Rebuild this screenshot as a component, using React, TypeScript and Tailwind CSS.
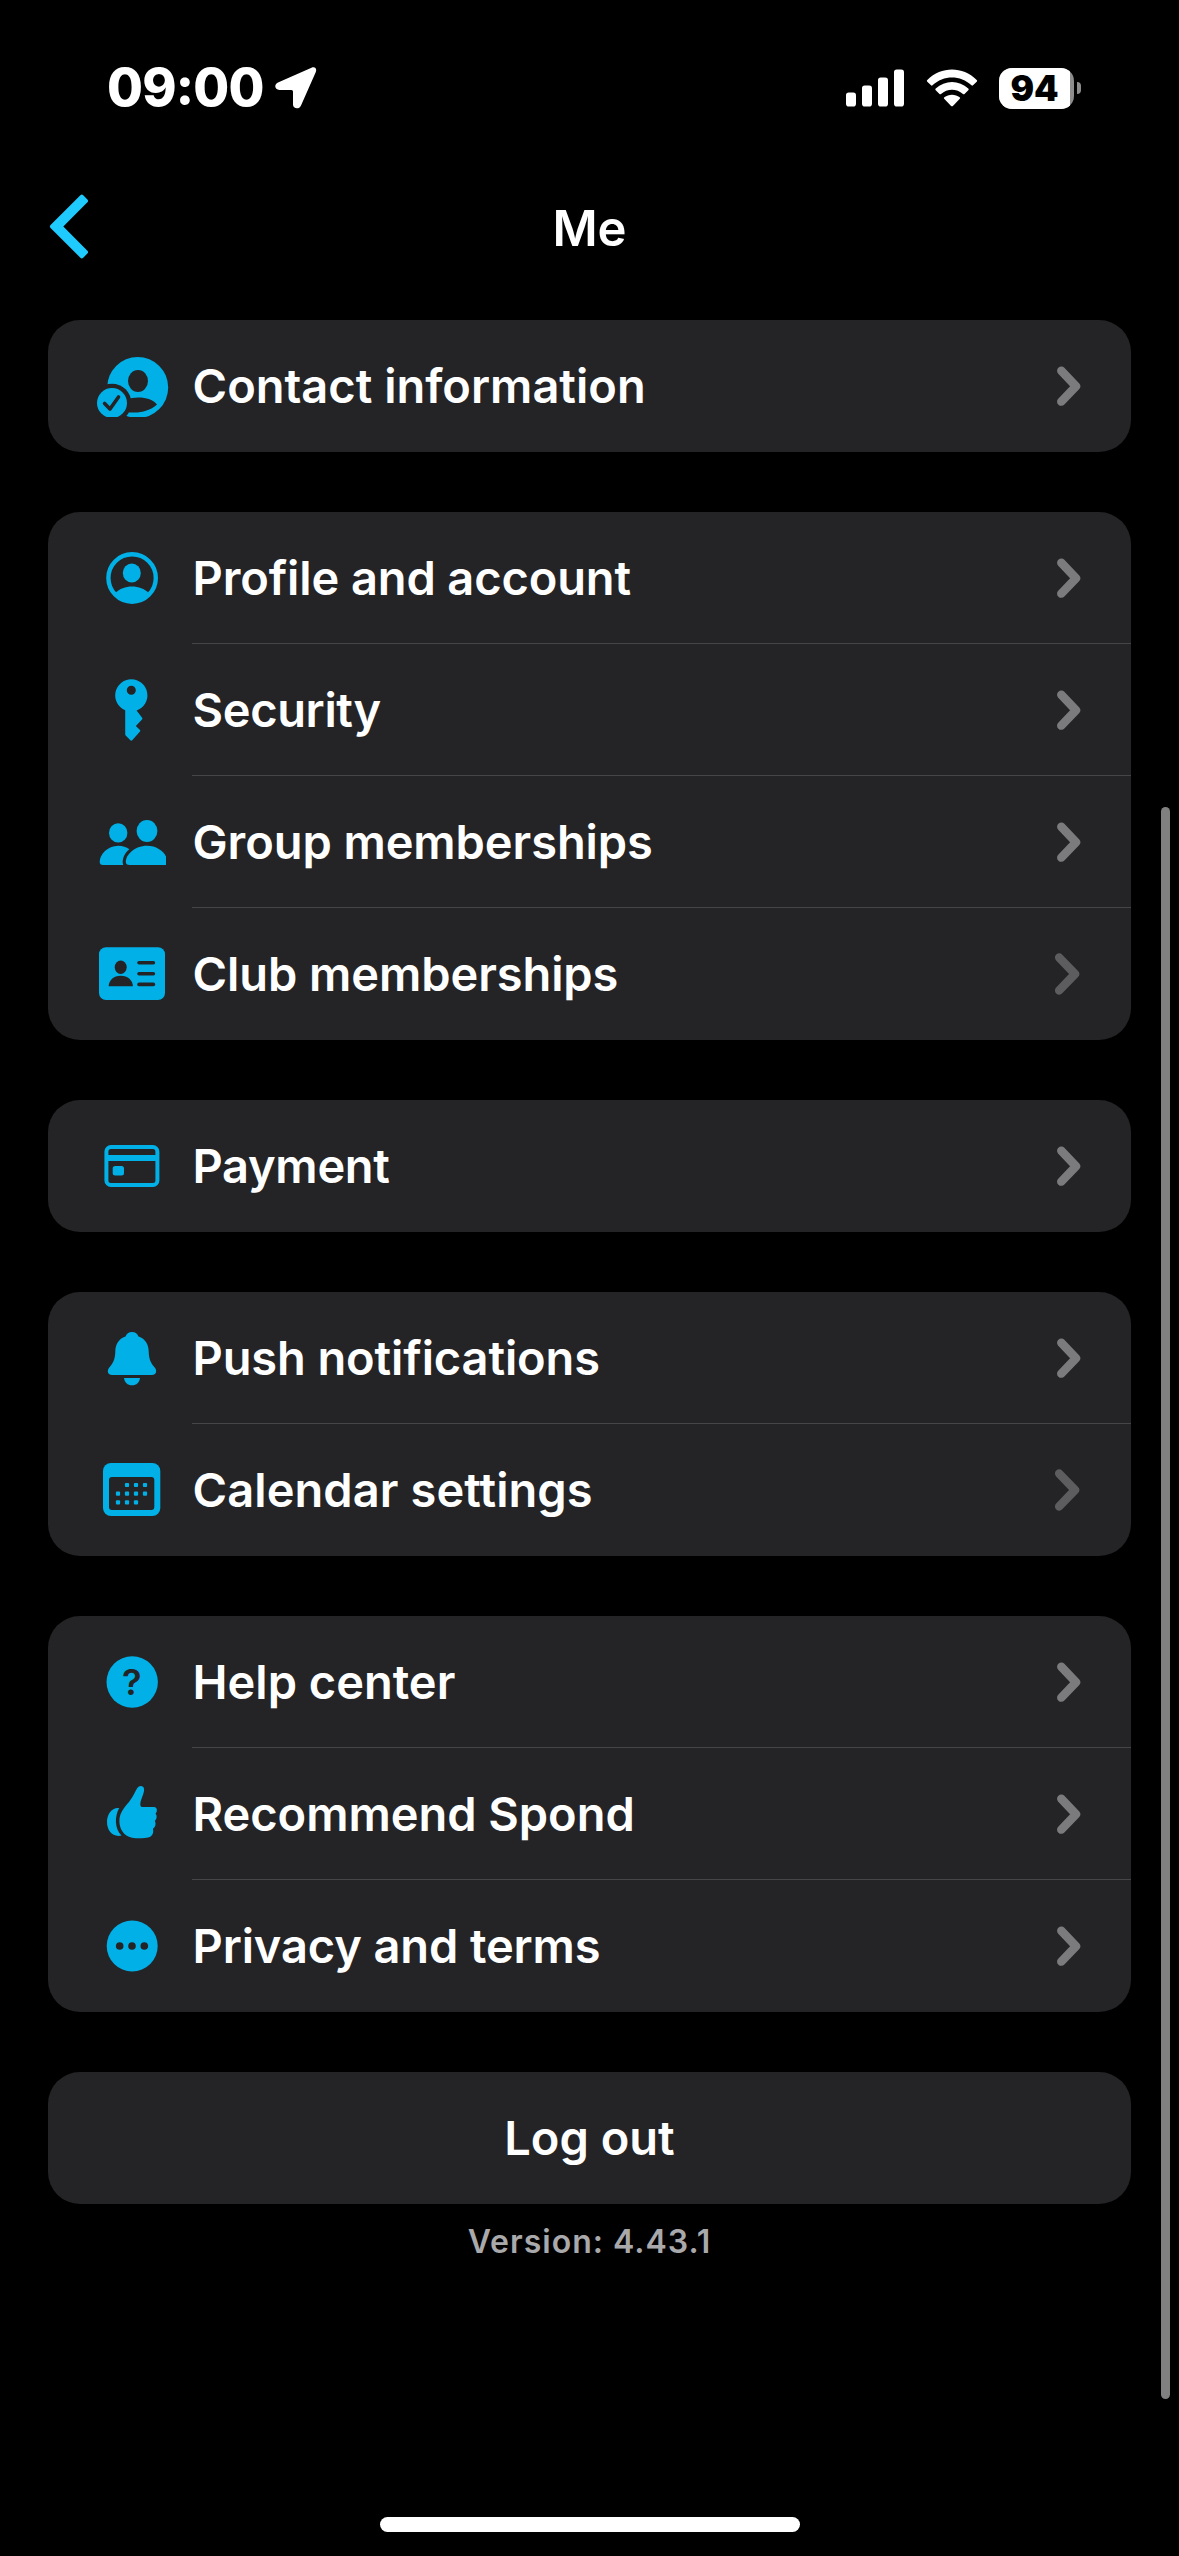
import type { ReactNode } from "react";

const BLUE = "#00b0e6";
const CARD = "#242426";

function RowIcon({ children }: { children: ReactNode }) {
  return (
    <svg className="h-[132px] w-24 shrink-0" viewBox="84 0 96 132" fill={BLUE}>
      {children}
    </svg>
  );
}

const icons = {
  contact: (
    <RowIcon>
      <clipPath id="contactClip">
        <rect x="84" y="30" width="96" height="67" />
      </clipPath>
      <g clipPath="url(#contactClip)">
        <circle cx="137.7" cy="67.5" r="30.5" />
        <ellipse cx="138" cy="61" rx="10" ry="11" fill={CARD} />
        <path d="M116 86C126 75 150 75 157 84.6C146 94.4 130 94.4 116 89Z" fill={CARD} />
        <circle cx="112" cy="83" r="19.3" fill={CARD} />
        <circle cx="112" cy="83" r="15" />
        <path d="M104.6 83.5L110 89L118.5 77" fill="none" stroke={CARD} strokeWidth="3.6" strokeLinecap="round" strokeLinejoin="round" />
      </g>
    </RowIcon>
  ),
  profile: (
    <RowIcon>
      <circle cx="132.1" cy="66" r="23.7" fill="none" stroke={BLUE} strokeWidth="4.4" />
      <ellipse cx="131.8" cy="61" rx="9" ry="9.4" />
      <path d="M115.5 81C123 72.2 141 72.2 148.6 81C141 93.5 123 93.5 115.5 81Z" />
    </RowIcon>
  ),
  key: (
    <RowIcon>
      <path
        fillRule="evenodd"
        d="M131.3 35.3A16.1 16.1 0 0 1 136.6 66.6L142.3 74Q142.7 74.8 142 75.5L135.8 82L140 86Q140.7 86.8 140 87.6L132.2 96.3Q131.3 97 130.4 96.3L125.7 91.5Q125.2 91 125.2 90V66.3A16.1 16.1 0 0 1 131.3 35.3ZM131.3 41.7A4.5 4.5 0 1 0 131.3 50.7A4.5 4.5 0 1 0 131.3 41.7Z"
      />
    </RowIcon>
  ),
  group: (
    <RowIcon>
      <ellipse cx="118.2" cy="56.9" rx="9.2" ry="9.7" />
      <ellipse cx="147" cy="55" rx="10.4" ry="11.1" />
      <path d="M129.4 73.2C126.5 71 122.5 69.8 118.3 69.8C107.5 69.8 99.7 78.5 99.7 85.7Q99.7 89 103 89H123.2C121.5 83.5 124.5 77 129.4 73.2Z" />
      <path d="M147 69.7C134.5 69.7 125.8 78.8 125.8 85.7Q125.8 89 129.5 89H166V80.5C163 74.5 156 69.7 147 69.7Z" />
    </RowIcon>
  ),
  club: (
    <RowIcon>
      <rect x="99" y="39.3" width="66" height="52.7" rx="7" />
      <g fill={CARD}>
        <ellipse cx="120.7" cy="59.3" rx="6" ry="6.7" />
        <path d="M108.7 78.2C108.7 72.5 113.5 67.7 120.7 67.7C127.9 67.7 132.9 72.5 132.9 78.2Z" />
        <rect x="137.2" y="53" width="18" height="3.6" rx="1.8" />
        <rect x="137.2" y="64" width="18" height="3.6" rx="1.8" />
        <rect x="137.2" y="74.6" width="18" height="3.6" rx="1.8" />
      </g>
    </RowIcon>
  ),
  payment: (
    <RowIcon>
      <rect x="106.4" y="47" width="51" height="38" rx="4.5" fill="none" stroke={BLUE} strokeWidth="4" />
      <rect x="106" y="55" width="52" height="6" />
      <rect x="112.7" y="66" width="11.3" height="9.4" rx="2.5" />
    </RowIcon>
  ),
  bell: (
    <RowIcon>
      <path d="M132 40C128.8 40 126.3 41.8 125.5 44.6C118.5 47 115.5 52.5 115.3 59.5C115.1 67 113.5 70.5 109.3 75.5C106.5 79 107.8 83 112 83H152C156.2 83 157.5 79 154.7 75.5C150.5 70.5 148.9 67 148.7 59.5C148.5 52.5 145.5 47 138.5 44.6C137.7 41.8 135.2 40 132 40Z" />
      <path d="M124 86H140C139.5 90.5 136.5 93.3 132 93.3C127.5 93.3 124.5 90.5 124 86Z" />
    </RowIcon>
  ),
  calendar: (
    <RowIcon>
      <rect x="103" y="39" width="57.3" height="53" rx="8" />
      <rect x="109" y="53" width="45.3" height="33" rx="3" fill={CARD} />
      {[
        [127, 61], [136, 61], [145, 61],
        [118, 69.7], [127, 69.7], [136, 69.7], [145, 69.7],
        [118, 78.3], [127, 78.3], [136, 78.3],
      ].map(([x, y]) => (
        <rect key={`${x}-${y}`} x={x - 2.1} y={y - 2.1} width="4.2" height="4.2" rx="1" />
      ))}
    </RowIcon>
  ),
  help: (
    <RowIcon>
      <circle cx="132.2" cy="66" r="25.7" />
      <text x="131.9" y="79.1" textAnchor="middle" fill={CARD} fontFamily="Inter" fontWeight="600" fontSize="36">
        ?
      </text>
    </RowIcon>
  ),
  thumb: (
    <RowIcon>
      <path d="M140.6 38C143.5 37.8 144.6 40 144 43C143.2 48 139.8 53 140.4 57.5Q140.8 59 142.5 59H154C157.3 59 157.8 63.5 155.5 65.5C157.3 67.5 157 71 154.8 73C156.3 75.5 155.5 79 152.9 80.8C154 84 152.5 88.5 149 89.3C144 90.6 137 90.7 132 89.7C123.5 88 119.3 80.5 119.4 73C119.5 65 123.5 60.5 129 54C133.5 48.5 135.5 42.5 137.5 39.8Q138.8 38.1 140.6 38Z" />
      <path d="M119.2 60C112 59 107 66 107 74C107 82.5 112.5 89.5 121.5 87.6C114.5 80.5 114.5 68.5 119.2 60Z" />
    </RowIcon>
  ),
  more: (
    <RowIcon>
      <circle cx="132.2" cy="66" r="25.5" />
      <g fill={CARD}>
        <circle cx="119.7" cy="66" r="3.8" />
        <circle cx="132" cy="66" r="3.8" />
        <circle cx="144.3" cy="66" r="3.8" />
      </g>
    </RowIcon>
  ),
};

type Item = { icon: keyof typeof icons; label: string; tracking: string; dim?: boolean };

const sections: Item[][] = [
  [{ icon: "contact", label: "Contact information", tracking: "tracking-[0px]" }],
  [
    { icon: "profile", label: "Profile and account", tracking: "tracking-[-0.12px]" },
    { icon: "key", label: "Security", tracking: "tracking-[-0.35px]" },
    { icon: "group", label: "Group memberships", tracking: "tracking-[-0.08px]" },
    { icon: "club", label: "Club memberships", tracking: "tracking-[-0.08px]", dim: true },
  ],
  [{ icon: "payment", label: "Payment", tracking: "tracking-[-0.3px]" }],
  [
    { icon: "bell", label: "Push notifications", tracking: "tracking-[-0.12px]" },
    { icon: "calendar", label: "Calendar settings", tracking: "tracking-[0.08px]", dim: true },
  ],
  [
    { icon: "help", label: "Help center", tracking: "tracking-[0px]" },
    { icon: "thumb", label: "Recommend Spond", tracking: "tracking-[-0.04px]" },
    { icon: "more", label: "Privacy and terms", tracking: "tracking-[-0.12px]" },
  ],
];

function Row({ item, last }: { item: Item; last: boolean }) {
  return (
    <div className="flex h-[132px] items-center pl-9">
      {icons[item.icon]}
      <div
        className={
          last
            ? "ml-3 flex h-full flex-1 items-center justify-between pr-12 pl-[0.5px]"
            : "ml-3 flex h-full flex-1 items-center justify-between border-b border-[#464648] pr-12 pl-[0.5px]"
        }
      >
        <span className={`text-[47px] leading-[60px] font-semibold whitespace-nowrap ${item.tracking}`}>{item.label}</span>
        <svg className="h-[42px] w-[30px]" viewBox="0 0 30 42" fill="none">
          <path
            d={item.dim ? "M6.2 4.6L22 21L6.2 37.4" : "M8.3 5.8L23 21.2L8.3 36.6"}
            stroke={item.dim ? "#5d5d5f" : "#7b7b7d"}
            strokeWidth="8.5"
            strokeLinecap="round"
            strokeLinejoin="round"
          />
        </svg>
      </div>
    </div>
  );
}

function StatusBar() {
  return (
    <div className="flex h-[177px] items-start justify-between pt-[60px] pr-[98px] pl-[107px]">
      <div className="flex h-14 items-center">
        <div className="flex w-[154px] items-center text-[52px] leading-[56px] font-extrabold tracking-[-0.8px]">
          <span>09</span>
          <span className="relative -top-[2px]">:</span>
          <span>00</span>
        </div>
        <svg className="ml-[13px] h-[44px] w-[44px]" viewBox="0 0 44 44" fill="#fff">
          <path d="M37.5 1.7C41 0.2 43.2 2.7 41.7 6.2L27 39.5C25.2 43.8 19 43 19 38.5V25.5Q19 24 17.5 24H5.5C0.5 24 -0.2 18.3 4 16.5Z" />
        </svg>
      </div>
      <div className="flex h-14 items-center">
        <svg className="h-[38px] w-[58px]" viewBox="0 0 58 38" fill="#fff">
          <rect x="0" y="23.5" width="10" height="14" rx="2.8" />
          <rect x="16" y="16.5" width="10" height="21" rx="2.8" />
          <rect x="32" y="8.5" width="10" height="29" rx="2.8" />
          <rect x="48" y="0.5" width="10" height="37" rx="2.8" />
        </svg>
        <svg className="ml-[22px] h-[38px] w-[52px]" viewBox="0 0 52 38" fill="#fff">
          <path d="M1.3 12.7Q0.4 11.8 1.3 10.9C15.5 -3 36.5 -3 50.7 10.9Q51.6 11.8 50.7 12.7L47 16.3Q46.3 17 45.5 16.3C34.5 5.9 17.5 5.9 6.5 16.3Q5.7 17 5 16.3Z" />
          <path d="M9.7 21.2Q8.8 20.3 9.7 19.5C19 10.8 33 10.8 42.3 19.5Q43.2 20.3 42.3 21.2L38.5 25Q37.8 25.6 37 25C30.8 19.3 21.2 19.3 15 25Q14.2 25.6 13.5 25Z" />
          <path d="M18.2 29.8Q17.4 28.9 18.3 28.2C22.7 24.8 29.3 24.8 33.7 28.2Q34.6 28.9 33.8 29.8L26.9 36.9Q26 37.7 25.1 36.9Z" />
        </svg>
        <div className="ml-[21px] flex h-[41px] w-[75px] overflow-hidden rounded-[13px] bg-[#8c8c8c]">
          <span className="flex w-[71px] items-center justify-center bg-white text-[35px] leading-[41px] font-black text-black">94</span>
        </div>
        <div className="ml-[3px] h-3 w-1 rounded-r-full bg-[#8c8c8c]" />
      </div>
    </div>
  );
}

export default function App() {
  return (
    <div
      className="relative flex h-[2556px] w-[1179px] flex-col overflow-hidden bg-black text-white"
      style={{ fontFamily: 'Inter, "Liberation Sans", sans-serif' }}
    >
      <StatusBar />
      <header className="grid h-[143px] grid-cols-3 items-start px-12">
        <svg className="mt-[17px] h-[65px] w-[42px]" viewBox="0 0 42 65">
          <path
            d="M4 32.5L33.8 2.7L38 6.9L12.4 32.5L38 58.1L33.8 62.3Z"
            fill="#1fcaff"
            stroke="#1fcaff"
            strokeWidth="4"
            strokeLinejoin="round"
          />
        </svg>
        <h1 className="mt-[22px] text-center text-[49px] leading-[60px] font-semibold">Me</h1>
      </header>
      <main className="flex flex-col gap-[60px] px-12">
        {sections.map((items) => (
          <section key={items[0].label} className="overflow-hidden rounded-[32px] bg-[#242426]">
            {items.map((item, i) => (
              <Row key={item.label} item={item} last={i === items.length - 1} />
            ))}
          </section>
        ))}
        <button className="h-[132px] rounded-[32px] bg-[#242426] text-[47px] leading-[60px] font-semibold">Log out</button>
      </main>
      <p className="mt-[18px] text-center text-[32px] leading-10 font-semibold tracking-[1px] text-[#a9a9ab]">Version: 4.43.1</p>
      <div className="absolute top-[807px] left-[1161px] h-[1592px] w-[9px] rounded-full bg-[#808080]" />
      <div className="absolute top-[2517px] left-[380px] h-[15px] w-[420px] rounded-full bg-white" />
    </div>
  );
}
